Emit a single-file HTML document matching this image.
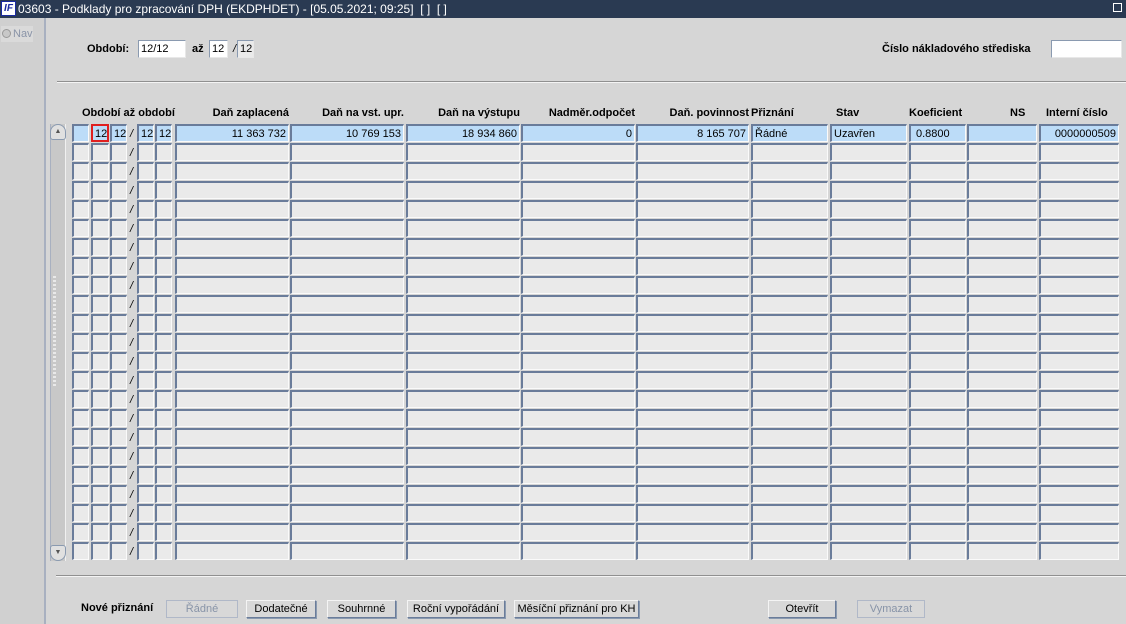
<!DOCTYPE html>
<html><head><meta charset="utf-8">
<style>
*{box-sizing:border-box;margin:0;padding:0}
body{width:1126px;height:624px;overflow:hidden;background:#d6d6d6;font-family:"Liberation Sans",Arial,sans-serif;font-size:11px;color:#000;position:relative}
.a{position:absolute}
#title{left:0;top:0;width:1126px;height:18px;background:#2a3a52;color:#fff;font-size:12px;line-height:18px;padding-left:18px}
#logo{left:1px;top:1px;width:15px;height:15px;background:#fff;border:1px solid #1a2aa0;color:#1a2aa0;font-weight:bold;font-style:italic;font-size:10px;line-height:13px;text-align:center}
#left{left:0;top:18px;width:46px;height:606px;background:#d0d0d0;border-right:2px solid #a8b0c0}
.lbl{font-weight:bold;white-space:nowrap}
.inp{background:#fff;border:1px solid #8a9ab0;border-right-color:#e8e8e8;border-bottom-color:#e8e8e8;height:18px;line-height:17px;padding-left:2px;font-size:11px}
.c{border:2px solid #6a7c9a;border-right:1px solid #fafafa;border-bottom:1px solid #fafafa;background:#eaeaea;height:18px;line-height:17px;font-size:11px;padding:0 2px;white-space:nowrap;overflow:hidden}
.r1 .c{background:#bcdcf8}
.hd{top:107px;font-weight:bold;white-space:nowrap}
.btn{top:600px;height:18px;border:1px solid #6a7c9a;border-top-color:#f4f4f4;border-left-color:#f4f4f4;background:#d8d8d8;text-align:center;line-height:16px;font-size:11px;box-shadow:1px 1px 0 #8a9ab0}
.dis{color:#8894a8;border-color:#b0b8c8}
.hl{height:2px;border-top:1px solid #909090;border-bottom:1px solid #f4f4f4}
</style></head><body>
<div id="title" class="a">03603 - Podklady pro zpracování DPH (EKDPHDET) - [05.05.2021; 09:25] &nbsp;[ ] &nbsp;[ ]</div>
<div id="logo" class="a">IF</div>
<div class="a" style="right:4px;top:3px;width:9px;height:9px;border:1px solid #fff"></div>
<div id="left" class="a"></div>
<div class="a" style="left:1px;top:26px;width:32px;height:16px;background:#dadada;color:#8a94a8;line-height:16px;font-size:11px;white-space:nowrap;overflow:hidden"><span style="display:inline-block;width:9px;height:9px;border-radius:50%;background:#c8c8c8;border:1px solid #999;vertical-align:-1px;margin:0 2px 0 1px"></span>Nav</div>

<div class="a lbl" style="left:87px;top:43px">Období:</div>
<div class="a inp" style="left:138px;top:40px;width:48px">12/12</div>
<div class="a lbl" style="left:192px;top:43px">až</div>
<div class="a inp" style="left:209px;top:40px;width:19px">12</div>
<div class="a" style="left:233px;top:43px;font-style:italic">/</div>
<div class="a inp" style="left:237px;top:40px;width:17px;background:#eaeaea">12</div>
<div class="a lbl" style="left:882px;top:43px">Číslo nákladového střediska</div>
<div class="a inp" style="left:1051px;top:40px;width:71px"></div>
<div class="a hl" style="left:57px;top:81px;width:1069px"></div>

<div class="a hd" style="left:82px">Období až období</div>
<div class="a hd" style="left:175px;width:114px;text-align:right">Daň zaplacená</div>
<div class="a hd" style="left:290px;width:114px;text-align:right">Daň na vst. upr.</div>
<div class="a hd" style="left:406px;width:114px;text-align:right">Daň na výstupu</div>
<div class="a hd" style="left:521px;width:114px;text-align:right">Nadměr.odpočet</div>
<div class="a hd" style="left:636px;width:113px;text-align:right">Daň. povinnost</div>
<div class="a hd" style="left:751px">Přiznání</div>
<div class="a hd" style="left:836px">Stav</div>
<div class="a hd" style="left:909px">Koeficient</div>
<div class="a hd" style="left:1010px">NS</div>
<div class="a hd" style="left:1046px">Interní číslo</div>

<div class="a" style="left:50px;top:124px;width:16px;height:437px;background:#c8c8c8;border-left:1px solid #a8b0c0;border-right:1px solid #f0f0f0"></div>
<div class="a" style="left:50px;top:124px;width:16px;height:16px;border:1px solid #8a9ab0;border-radius:8px 8px 3px 3px;background:#e0e0e0;font-size:7px;text-align:center;line-height:13px;color:#555">▲</div>
<div class="a" style="left:50px;top:545px;width:16px;height:16px;border:1px solid #8a9ab0;border-radius:3px 3px 8px 8px;background:#e0e0e0;font-size:7px;text-align:center;line-height:13px;color:#555">▼</div>
<div class="a" style="left:53px;top:276px;width:10px;height:110px;background:repeating-linear-gradient(#fff 0 2px,transparent 2px 4px);opacity:.6;background-size:3px 4px;background-repeat:repeat-y"></div>

<div id="grid"></div>
<div class="a hl" style="left:56px;top:575px;width:1070px"></div>

<div class="a lbl" style="left:81px;top:602px">Nové přiznání</div>
<div class="a btn dis" style="left:166px;width:72px;box-shadow:none">Řádné</div>
<div class="a btn" style="left:246px;width:70px">Dodatečné</div>
<div class="a btn" style="left:327px;width:69px">Souhrnné</div>
<div class="a btn" style="left:407px;width:98px">Roční vypořádání</div>
<div class="a btn" style="left:514px;width:125px">Měsíční přiznání pro KH</div>
<div class="a btn" style="left:768px;width:68px">Otevřít</div>
<div class="a btn dis" style="left:857px;width:68px;box-shadow:none">Vymazat</div>

<script>
var cols=[[72,17],[91,18],[110,17],[137,17],[155,17],[175,114],[290,114],[406,114],[521,114],[636,113],[751,77],[830,77],[909,57],[967,70],[1039,80]];
var v=["","12","12","12","12","11 363 732","10 769 153","18 934 860","0","8 165 707","Řádné","Uzavřen","0.8800","","0000000509"];
var right=[0,0,0,0,0,1,1,1,1,1,0,0,0,0,1];
var h="";
for(var r=0;r<23;r++){var y=124+r*19;h+='<div class="'+(r==0?'r1':'')+'">';
for(var i=0;i<cols.length;i++){var t=r==0?v[i]:"";var st='left:'+cols[i][0]+'px;top:'+y+'px;width:'+cols[i][1]+'px;';
if(right[i])st+='text-align:right;';if(i==12)st+='padding-left:5px;';
if(r==0&&i==1)st+='border:2px solid #e02020;background:#bcdcf8;';
h+='<div class="a c" style="'+st+'">'+t+'</div>';}
h+='<div class="a" style="left:130px;top:'+(y+4)+'px;font-style:italic">/</div></div>';}
document.getElementById('grid').innerHTML=h;
</script>
</body></html>
